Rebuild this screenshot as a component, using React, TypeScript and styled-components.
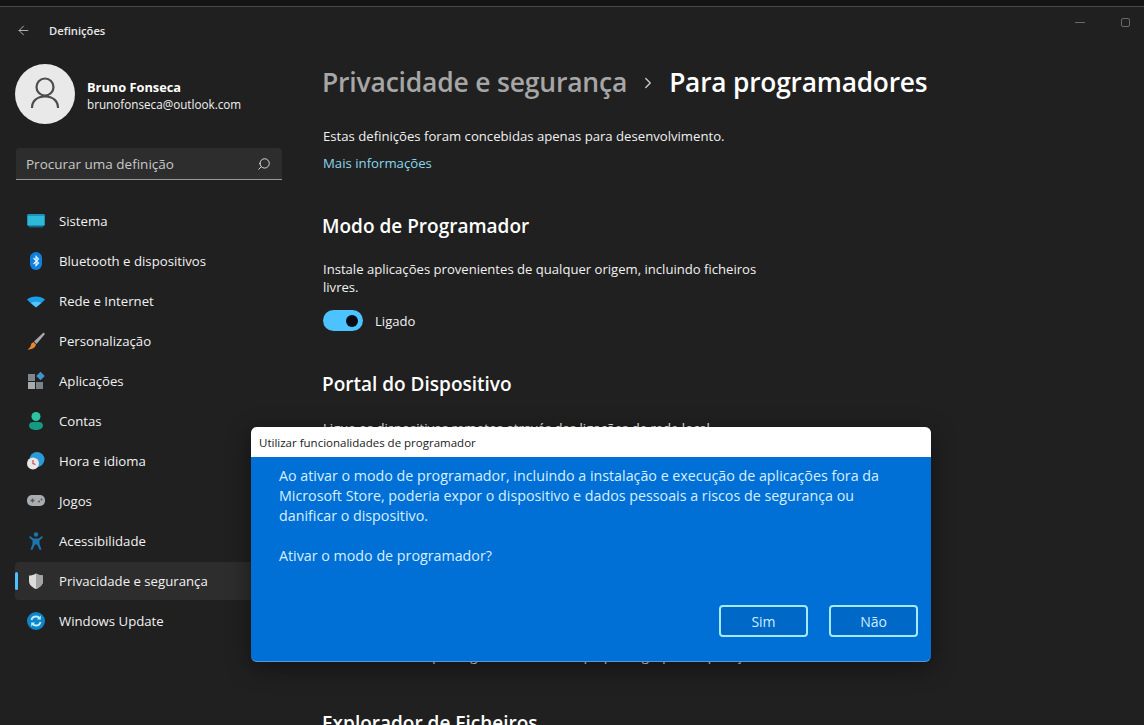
import type { ReactNode } from 'react';
import styled, { createGlobalStyle } from 'styled-components';
import { ArrowLeft, ChevronRight, Search } from 'lucide-react';

const FONT = '"Open Sans", "Noto Sans", sans-serif';

const GlobalStyle = createGlobalStyle`
  html, body {
    margin: 0;
    padding: 0;
    background: #202020;
  }
  * {
    box-sizing: border-box;
  }
`;

const Page = styled.div`
  position: relative;
  width: 1144px;
  height: 725px;
  overflow: hidden;
  background: #202020;
  color: #fff;
  font-family: ${FONT};
`;

const TopStrip = styled.div`
  height: 7px;
  background: #141414;
  border-bottom: 1px solid #4a4a4a;
`;

const Header = styled.header`
  display: flex;
  align-items: center;
  height: 46px;
  padding: 0 14px 0 16px;
`;

const BackButton = styled.span`
  display: flex;
  width: 33px;
  color: #c4c4c4;
`;

const AppName = styled.span`
  flex: 1;
  font-size: 11.2px;
  font-weight: 600;
  color: #e8e8e8;
`;

const WindowControls = styled.div`
  display: flex;
  align-items: center;
  gap: 36px;
  margin-top: -16px;
`;

const MinimizeGlyph = styled.span`
  width: 10px;
  height: 1px;
  background: #6a6a6a;
`;

const MaximizeGlyph = styled.span`
  width: 9px;
  height: 9px;
  border: 1px solid #6a6a6a;
  border-radius: 2px;
`;

const Layout = styled.div`
  display: grid;
  grid-template-columns: 322px 1fr;
`;

const Sidebar = styled.aside`
  padding: 11px 0 0 15px;
`;

const Profile = styled.div`
  display: flex;
  align-items: center;
  gap: 12px;
`;

const Avatar = styled.div`
  display: flex;
  align-items: center;
  justify-content: center;
  width: 60px;
  height: 60px;
  border-radius: 50%;
  background: #e9e9e9;
  color: #4c4c4c;
`;

const ProfileText = styled.div`
  display: flex;
  flex-direction: column;
  margin-top: 3px;
`;

const ProfileName = styled.span`
  font-size: 12.8px;
  line-height: 17px;
  font-weight: 700;
`;

const ProfileMail = styled.span`
  font-size: 11.7px;
  line-height: 17px;
  color: #f0f0f0;
`;

const SearchBox = styled.div`
  display: flex;
  align-items: center;
  justify-content: space-between;
  width: 266px;
  height: 32px;
  margin: 24px 0 22px 1px;
  padding: 0 11px 0 10px;
  background: #2d2d2d;
  border-bottom: 1px solid #9a9a9a;
  border-radius: 4px 4px 0 0;
  font-size: 13.5px;
  color: #c8c8c8;
`;

const SearchGlyph = styled(Search)`
  transform: scaleX(-1);
  color: #e0e0e0;
`;

const Nav = styled.nav`
  display: flex;
  flex-direction: column;
  gap: 2px;
  width: 260px;
`;

const NavItem = styled.div<{ $active?: boolean }>`
  position: relative;
  display: flex;
  align-items: center;
  gap: 13px;
  height: 38px;
  padding-left: 11px;
  border-radius: 4px;
  background: ${(p) => (p.$active ? '#2d2d2d' : 'transparent')};
  font-size: 13.2px;
  color: #f2f2f2;
`;

const ActiveMark = styled.span`
  position: absolute;
  left: 0;
  top: 10px;
  width: 3px;
  height: 18px;
  border-radius: 2px;
  background: #4cc2ff;
`;

const Main = styled.main`
  display: flex;
  flex-direction: column;
  align-items: flex-start;
`;

const Breadcrumb = styled.h1`
  display: flex;
  align-items: center;
  height: 40px;
  margin: 9px 0 0;
  font-size: 26.5px;
  font-weight: 600;
  letter-spacing: -0.2px;
`;

const CrumbParent = styled.span`
  color: #a6a6a6;
`;

const CrumbCurrent = styled.span`
  font-size: 26.3px;
`;

const CrumbSeparator = styled(ChevronRight)`
  margin: 2px 12px 0 12px;
  color: #c8c8c8;
`;

const Paragraph = styled.p`
  width: 445px;
  margin: 0 0 0 1px;
  font-size: 13.1px;
  line-height: 18px;
  color: #f0f0f0;
`;

const Intro = styled(Paragraph)`
  width: auto;
  margin-top: 25px;
  font-size: 13.15px;
`;

const MoreLink = styled.a`
  margin: 9px 0 0 1px;
  font-size: 13.2px;
  line-height: 18px;
  color: #8ad6e8;
`;

const SectionTitle = styled.h2`
  margin: 0;
  font-size: 19px;
  line-height: 26px;
  font-weight: 600;
`;

const DeveloperTitle = styled(SectionTitle)`
  margin-top: 41px;
  margin-bottom: 21px;
`;

const ToggleRow = styled.div`
  display: flex;
  align-items: center;
  gap: 12px;
  margin: 14px 0 0 1px;
  font-size: 13.1px;
  color: #f0f0f0;
`;

const ToggleTrack = styled.span`
  display: flex;
  align-items: center;
  justify-content: flex-end;
  width: 40px;
  height: 21px;
  padding-right: 5px;
  border-radius: 11px;
  background: #4cc2ff;
`;

const ToggleKnob = styled.span`
  width: 12px;
  height: 12px;
  border-radius: 50%;
  background: #0a0a14;
`;

const PortalTitle = styled(SectionTitle)`
  margin-top: 40px;
`;

const PortalText = styled(Paragraph)`
  width: auto;
  margin-top: 22px;
`;

const PortalNote = styled(Paragraph)`
  width: auto;
  margin-top: 210px;
`;

const ExplorerTitle = styled(SectionTitle)`
  margin-top: 45px;
`;

const Dialog = styled.section`
  position: absolute;
  left: 251px;
  top: 427px;
  display: flex;
  flex-direction: column;
  width: 680px;
  height: 235px;
  overflow: hidden;
  border-radius: 6px;
  border-bottom: 1px solid #5b97d6;
  background: #006fd6;
  box-shadow: 0 6px 24px rgba(0, 0, 0, 0.45);
`;

const DialogTitle = styled.div`
  display: flex;
  align-items: center;
  height: 30px;
  padding: 0 8px;
  background: #fff;
  font-size: 11.5px;
  color: #1a1a1a;
`;

const DialogBody = styled.div`
  flex: 1;
  padding: 9px 28px 0;
  font-size: 14.28px;
  line-height: 20px;
  color: #d8f0fd;
`;

const DialogParagraph = styled.p`
  margin: 0 0 20px;
`;

const DialogActions = styled.div`
  display: flex;
  justify-content: flex-end;
  gap: 21px;
  padding: 0 13px 24px 0;
`;

const DialogButton = styled.button`
  width: 89px;
  height: 32px;
  border: 2px solid #a3ebfb;
  border-radius: 4px;
  background: #0068c6;
  font-family: inherit;
  font-size: 14px;
  color: #cdeeff;
`;

const SystemIcon = () => (
  <svg width="20" height="16" viewBox="0 0 20 16">
    <rect x="1" y="1" width="18" height="12" rx="1.5" fill="#1793bc" />
    <rect x="2" y="3" width="16" height="9" fill="#2fb8d8" />
    <rect x="3" y="13" width="14" height="1.5" fill="#17627e" />
  </svg>
);

const BluetoothIcon = () => (
  <svg width="20" height="20" viewBox="0 0 20 20">
    <rect x="4" y="1" width="12" height="18" rx="6" fill="#0f7fe0" />
    <path d="M7.5 7l5 5-2.5 2.5v-9L12.500 8l-5 5" fill="none" stroke="#e6f4ff" strokeWidth="1.2" />
  </svg>
);

const WifiIcon = () => (
  <svg width="20" height="20" viewBox="0 0 20 20">
    <path d="M1 8.500C5.500 4.500 14.500 4.500 19 8.500L15.500 12C12.500 9.800 7.500 9.800 4.500 12Z" fill="#18a0ee" />
    <path d="M4.500 12C7.500 9.800 12.500 9.800 15.500 12L10 16.500Z" fill="#4cc8ff" />
  </svg>
);

const BrushIcon = () => (
  <svg width="20" height="20" viewBox="0 0 20 20">
    <path d="M17.500 1.500L19 3 10.500 13 8 10.500Z" fill="#a9a9ad" />
    <path d="M7.500 11L10 13.500C9.500 16.500 6 18.500 1.500 18.500 4 17 5 15 5 13.500 5.500 12 6.500 11.500 7.500 11Z" fill="#e8862e" />
  </svg>
);

const AppsIcon = () => (
  <svg width="20" height="20" viewBox="0 0 20 20">
    <rect x="2" y="3" width="7" height="7" fill="#7f868c" />
    <rect x="2" y="11" width="7" height="7" fill="#a5abb0" />
    <rect x="10" y="11" width="7" height="7" fill="#7a8187" />
    <rect x="11.500" y="2" width="6" height="6" transform="rotate(45 14.500 5)" fill="#3f93c9" />
  </svg>
);

const AccountIcon = () => (
  <svg width="20" height="20" viewBox="0 0 20 20">
    <circle cx="10" cy="5.500" r="4.500" fill="#2cc4a0" />
    <path d="M3 14.500C3 12 5 11 7 11H13C15 11 17 12 17 14.500 17 17.500 13.500 19 10 19S3 17.500 3 14.500Z" fill="#129a82" />
  </svg>
);

const TimeIcon = () => (
  <svg width="20" height="20" viewBox="0 0 20 20">
    <circle cx="11" cy="8.500" r="7.500" fill="#2b9ad8" />
    <circle cx="7" cy="12.500" r="6" fill="#e7e7e7" />
    <path d="M7 9v3.500l2.500 1" fill="none" stroke="#c0504d" strokeWidth="1.200" />
  </svg>
);

const GamesIcon = () => (
  <svg width="20" height="20" viewBox="0 0 20 20">
    <rect x="1" y="4" width="18" height="11" rx="5" fill="#a9adb0" />
    <path d="M4.500 9.500h4M6.500 7.500v4" stroke="#56595c" strokeWidth="1.300" />
    <circle cx="13" cy="10.500" r="1" fill="#56595c" />
    <circle cx="15.500" cy="8.500" r="1" fill="#56595c" />
  </svg>
);

const AccessibilityIcon = () => (
  <svg width="20" height="20" viewBox="0 0 20 20">
    <circle cx="10" cy="3.500" r="2.200" fill="#1c74ad" />
    <path d="M4 5l3.500 2.500h5L16 5l.8 1.500-3.300 3v3.500l2 5.500-1.700.5-2.800-5.500h-2l-2.800 5.500-1.700-.5 2-5.500V9.500L3.200 6.500Z" fill="#1c74ad" />
  </svg>
);

const ShieldIcon = () => (
  <svg width="20" height="20" viewBox="0 0 20 20">
    <path d="M10 2.500C12.500 4 14.500 4.500 17 4.500V10C17 14 13.500 16.500 10 18 6.500 16.500 3 14 3 10V4.500C5.500 4.500 7.500 4 10 2.500Z" fill="#dcdcdc" />
    <path d="M10 2.500C12.500 4 14.500 4.500 17 4.500V10C17 14 13.500 16.500 10 18Z" fill="#a4a4a4" />
  </svg>
);

const UpdateIcon = () => (
  <svg width="20" height="20" viewBox="0 0 20 20">
    <circle cx="10" cy="10" r="9" fill="#0f85c9" />
    <path d="M5.500 9C6 6.800 8 5.500 10 5.500c1.500 0 2.800.7 3.500 1.800M14.500 11c-.5 2.200-2.500 3.500-4.500 3.500-1.500 0-2.800-.7-3.500-1.800" fill="none" stroke="#bfefff" strokeWidth="1.800" />
    <path d="M14.800 4.500v4h-4ZM5.200 15.500v-4h4Z" fill="#bfefff" />
  </svg>
);

const NAV_ITEMS: { label: string; icon: ReactNode; active?: boolean }[] = [
  { label: 'Sistema', icon: <SystemIcon /> },
  { label: 'Bluetooth e dispositivos', icon: <BluetoothIcon /> },
  { label: 'Rede e Internet', icon: <WifiIcon /> },
  { label: 'Personalização', icon: <BrushIcon /> },
  { label: 'Aplicações', icon: <AppsIcon /> },
  { label: 'Contas', icon: <AccountIcon /> },
  { label: 'Hora e idioma', icon: <TimeIcon /> },
  { label: 'Jogos', icon: <GamesIcon /> },
  { label: 'Acessibilidade', icon: <AccessibilityIcon /> },
  { label: 'Privacidade e segurança', icon: <ShieldIcon />, active: true },
  { label: 'Windows Update', icon: <UpdateIcon /> },
];

const UserGlyph = () => (
  <svg width="30" height="34" viewBox="0 0 30 34" fill="none" stroke="currentColor" strokeWidth="2.200">
    <circle cx="15" cy="10" r="8.500" />
    <path d="M2 31c0-7 5-11.500 13-11.500S28 24 28 31" />
  </svg>
);

export default function App() {
  return (
    <Page>
      <GlobalStyle />
      <TopStrip />
      <Header>
        <BackButton>
          <ArrowLeft size={15} strokeWidth={1.4} />
        </BackButton>
        <AppName>Definições</AppName>
        <WindowControls>
          <MinimizeGlyph />
          <MaximizeGlyph />
        </WindowControls>
      </Header>
      <Layout>
        <Sidebar>
          <Profile>
            <Avatar>
              <UserGlyph />
            </Avatar>
            <ProfileText>
              <ProfileName>Bruno Fonseca</ProfileName>
              <ProfileMail>brunofonseca@outlook.com</ProfileMail>
            </ProfileText>
          </Profile>
          <SearchBox>
            <span>Procurar uma definição</span>
            <SearchGlyph size={14} strokeWidth={1.6} />
          </SearchBox>
          <Nav>
            {NAV_ITEMS.map((item) => (
              <NavItem key={item.label} $active={item.active}>
                {item.active && <ActiveMark />}
                {item.icon}
                {item.label}
              </NavItem>
            ))}
          </Nav>
        </Sidebar>
        <Main>
          <Breadcrumb>
            <CrumbParent>Privacidade e segurança</CrumbParent>
            <CrumbSeparator size={18} strokeWidth={1.8} />
            <CrumbCurrent>Para programadores</CrumbCurrent>
          </Breadcrumb>
          <Intro>Estas definições foram concebidas apenas para desenvolvimento.</Intro>
          <MoreLink>Mais informações</MoreLink>
          <DeveloperTitle>Modo de Programador</DeveloperTitle>
          <Paragraph>Instale aplicações provenientes de qualquer origem, incluindo ficheiros livres.</Paragraph>
          <ToggleRow>
            <ToggleTrack>
              <ToggleKnob />
            </ToggleTrack>
            Ligado
          </ToggleRow>
          <PortalTitle>Portal do Dispositivo</PortalTitle>
          <PortalText>Ligue os dispositivos remotos através das ligações de rede local.</PortalText>
          <PortalNote>Utilize este modo para ligar através de um pequeno grupo de aplicações.</PortalNote>
          <ExplorerTitle>Explorador de Ficheiros</ExplorerTitle>
        </Main>
      </Layout>
      <Dialog>
        <DialogTitle>Utilizar funcionalidades de programador</DialogTitle>
        <DialogBody>
          <DialogParagraph>
            Ao ativar o modo de programador, incluindo a instalação e execução de aplicações fora da Microsoft Store,
            poderia expor o dispositivo e dados pessoais a riscos de segurança ou danificar o dispositivo.
          </DialogParagraph>
          <DialogParagraph>Ativar o modo de programador?</DialogParagraph>
        </DialogBody>
        <DialogActions>
          <DialogButton type="button">Sim</DialogButton>
          <DialogButton type="button">Não</DialogButton>
        </DialogActions>
      </Dialog>
    </Page>
  );
}
